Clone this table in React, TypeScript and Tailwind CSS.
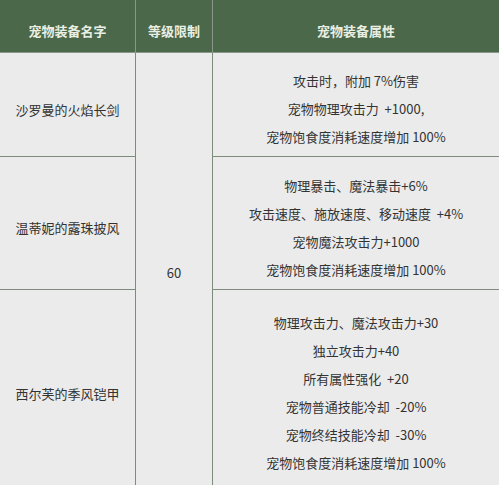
const rows = [
  {
    name: '沙罗曼的火焰长剑',
    h: 'h-[104px]',
    attrs: ['攻击时，附加 7%伤害', '宠物物理攻击力  +1000,', '宠物饱食度消耗速度增加 100%'],
  },
  {
    name: '温蒂妮的露珠披风',
    h: 'h-[133px]',
    attrs: ['物理暴击、魔法暴击+6%', '攻击速度、施放速度、移动速度  +4%', '宠物魔法攻击力+1000', '宠物饱食度消耗速度增加 100%'],
  },
  {
    name: '西尔芙的季风铠甲',
    h: 'h-[197px]',
    attrs: [
      '物理攻击力、魔法攻击力+30',
      '独立攻击力+40',
      '所有属性强化  +20',
      '宠物普通技能冷却  -20%',
      '宠物终结技能冷却  -30%',
      '宠物饱食度消耗速度增加 100%',
    ],
  },
];

export default function App() {
  return (
    <div
      className="w-[499px] h-[485px] overflow-hidden bg-[#ebebeb] text-[13px] text-[#333]"
      style={{ fontFamily: '"Noto Sans CJK SC", "Liberation Sans", sans-serif' }}
    >
      <div className="grid grid-cols-[136px_77px_286px]">
        {/* header */}
        <div className="h-[53px] bg-[#4b684a] border-r border-b border-[#87988a] flex items-center justify-center pt-[9px] font-bold text-[#e9efe2]">
          宠物装备名字
        </div>
        <div className="h-[53px] bg-[#4b684a] border-r border-b border-[#87988a] flex items-center justify-center pt-[9px] font-bold text-[#e9efe2]">
          等级限制
        </div>
        <div className="h-[53px] bg-[#4b684a] border-b border-[#87988a] flex items-center justify-center pt-[9px] font-bold text-[#e9efe2]">
          宠物装备属性
        </div>

        {rows.map((r, i) => (
          <div key={r.name} className="contents">
            <div
              className={`${r.h} border-r border-[#7d8c7d] ${i < 2 ? 'border-b' : ''} flex items-center justify-center pt-[10px]`}
              style={{ gridColumn: 1, gridRow: i + 2 }}
            >
              {r.name}
            </div>
            <div
              className={`${r.h} ${i < 2 ? 'border-b' : ''} border-[#7d8c7d] flex flex-col items-center justify-center pt-[9px] leading-[28px]`}
              style={{ gridColumn: 3, gridRow: i + 2 }}
            >
              {r.attrs.map((a) => (
                <div key={a} className="whitespace-pre">{a}</div>
              ))}
            </div>
          </div>
        ))}

        <div className="row-start-2 row-span-3 col-start-2 border-r border-[#7d8c7d] flex items-center justify-center pt-[6px]">
          60
        </div>
      </div>
    </div>
  );
}
